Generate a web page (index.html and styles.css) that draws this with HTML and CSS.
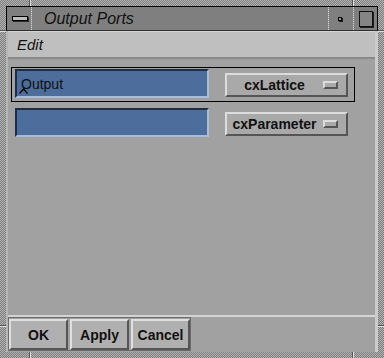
FILE: index.html
```html
<!DOCTYPE html>
<html>
<head>
<meta charset="utf-8">
<link rel="stylesheet" href="styles.css">
</head>
<body>
<div class="win">
  <div class="titlebar">
    <div class="tb-btn"><span class="bar-ico"></span></div>
    <div class="sep"></div>
    <div class="title">Output Ports</div>
    <div class="sep"></div>
    <div class="tb-btn"><span class="dot-ico"></span></div>
    <div class="sep"></div>
    <div class="tb-btn narrow"><span class="sq-ico"></span></div>
  </div>
  <div class="client">
    <div class="menubar"><span class="menu-item">Edit</span></div>
    <div class="content">
      <div class="row sel">
        <div class="field">
          <span class="field-text">Output</span>
          <svg class="caret" width="9" height="6" viewBox="0 0 9 6"><polyline points="0.5,5.5 4.5,1 8.5,5.5" fill="none" stroke="#000" stroke-width="1.2"/></svg>
        </div>
        <div class="option"><span class="opt-label">cxLattice</span><span class="opt-ind"></span></div>
      </div>
      <div class="row">
        <div class="field"></div>
        <div class="option"><span class="opt-label">cxParameter</span><span class="opt-ind"></span></div>
      </div>
    </div>
    <div class="btnbar">
      <div class="btngroup">
        <div class="btn">OK</div>
        <div class="btn">Apply</div>
        <div class="btn">Cancel</div>
      </div>
    </div>
  </div>
  <span class="mk mk-top1"></span>
  <span class="mk mk-top2"></span>
  <span class="mk mk-bot1"></span>
  <span class="mk mk-bot2"></span>
  <span class="mkh mk-left1"></span>
  <span class="mkh mk-left2"></span>
  <span class="mkh mk-right1"></span>
  <span class="mkh mk-right2"></span>
</div>
</body>
</html>
```
FILE: styles.css
```css
* { box-sizing: border-box; }
body {
  margin: 0;
  font-family: "Liberation Sans", Arial, sans-serif;
  color: #111;
}
.win {
  position: relative;
  width: 384px;
  height: 358px;
  padding: 6px;
  display: flex;
  flex-direction: column;
  background: repeating-conic-gradient(#7c7c7c 0 25%, #b4b4b4 0 50%) 0 0 / 2px 2px;
}
.titlebar {
  height: 25px;
  flex: none;
  display: flex;
  border: 1px solid #000;
  border-bottom: 1px solid #2e2e2e;
  background: #7f7f7f;
}
.tb-btn {
  width: 24px;
  flex: none;
  display: flex;
  align-items: center;
  justify-content: center;
}
.tb-btn.narrow { width: 23px; }
.sep {
  width: 1px;
  flex: none;
  background: repeating-linear-gradient(#cfcfcf 0 1px, #9a9a9a 1px 2px);
}
.title {
  flex: 1;
  padding-left: 12px;
  font-style: italic;
  font-size: 16px;
  line-height: 23px;
  color: #111;
}
.bar-ico {
  width: 16px;
  height: 5px;
  border: 1px solid #000;
  background: #bdbdbd;
  box-shadow: 1px 1px 0 #2a2a2a;
  margin-left: 1px;
}
.dot-ico {
  width: 4px;
  height: 4px;
  border: 1px solid #000;
  background: #9a9a9a;
  box-shadow: 1px 1px 0 #1a1a1a;
  margin-right: 2px;
}
.sq-ico {
  width: 14px;
  height: 16px;
  border: 1px solid #111;
  background: #858585;
  box-shadow: 1px 1px 0 #1e1e1e;
}
.client {
  flex: 1;
  display: flex;
  flex-direction: column;
  background: #a1a1a1;
  border-left: 2px solid #b6b6b6;
  border-right: 3px solid #cbcbcb;
}
.menubar {
  height: 28px;
  flex: none;
  display: flex;
  align-items: center;
  padding-left: 9px;
  background: #bfbfbf;
  border-top: 1px solid #d6d6d6;
  border-bottom: 2px solid #8a8a8a;
}
.menu-item {
  font-style: italic;
  font-size: 15px;
  color: #111;
}
.content {
  flex: 1;
  display: flex;
  flex-direction: column;
  gap: 4px;
  padding: 8px 0 0 3px;
}
.row {
  width: 344px;
  display: flex;
  align-items: flex-end;
  gap: 16px;
  border: 1px solid transparent;
  padding: 1px 6px 3px 3px;
}
.row.sel { border-color: #000; }
.field {
  position: relative;
  width: 194px;
  height: 29px;
  flex: none;
  display: flex;
  align-items: center;
  padding-left: 4px;
  background: #4d6e9c;
  border-top: 2px solid #1d2d48;
  border-left: 2px solid #1d2d48;
  border-bottom: 2px solid #aabdd6;
  border-right: 2px solid #aabdd6;
}
.field-text {
  font-size: 14px;
  color: #101010;
}
.caret {
  position: absolute;
  left: 2px;
  top: 17px;
}
.option {
  width: 123px;
  height: 24px;
  flex: none;
  margin-bottom: 1px;
  display: flex;
  align-items: center;
  padding: 0 8px 0 5px;
  background: #a9a9a9;
  border-top: 2px solid #dcdcdc;
  border-left: 2px solid #dcdcdc;
  border-bottom: 2px solid #555;
  border-right: 2px solid #555;
}
.opt-label {
  flex: 1;
  text-align: center;
  font-weight: bold;
  font-size: 14px;
  white-space: nowrap;
  color: #111;
}
.opt-ind {
  width: 15px;
  height: 8px;
  flex: none;
  margin-left: 6px;
  background: #a9a9a9;
  border-top: 2px solid #dcdcdc;
  border-left: 2px solid #dcdcdc;
  border-bottom: 2px solid #555;
  border-right: 2px solid #555;
}
.btnbar {
  flex: none;
  display: flex;
  padding-bottom: 1px;
  border-top: 2px solid #d4d4d4;
}
.btngroup {
  display: flex;
  gap: 2px;
  padding-top: 1px;
  border: 1px solid #6c6c6c;
}
.btn {
  width: 59px;
  height: 31px;
  display: flex;
  align-items: center;
  justify-content: center;
  font-weight: bold;
  font-size: 14px;
  color: #111;
  background: #b0b0b0;
  border-top: 2px solid #e0e0e0;
  border-left: 2px solid #e0e0e0;
  border-bottom: 2px solid #555;
  border-right: 2px solid #555;
}
.mk {
  position: absolute;
  width: 2px;
  height: 6px;
  border-left: 1px solid #555;
  border-right: 1px solid #e0e0e0;
}
.mk-top1 { left: 29px; top: 0; }
.mk-top2 { left: 352px; top: 0; }
.mk-bot1 { left: 29px; bottom: 0; }
.mk-bot2 { left: 352px; bottom: 0; }
.mkh {
  position: absolute;
  width: 6px;
  height: 2px;
  border-top: 1px solid #555;
  border-bottom: 1px solid #e0e0e0;
}
.mk-left1 { left: 0; top: 30px; }
.mk-left2 { left: 0; top: 325px; }
.mk-right1 { right: 0; top: 30px; }
.mk-right2 { right: 0; top: 325px; }
```
